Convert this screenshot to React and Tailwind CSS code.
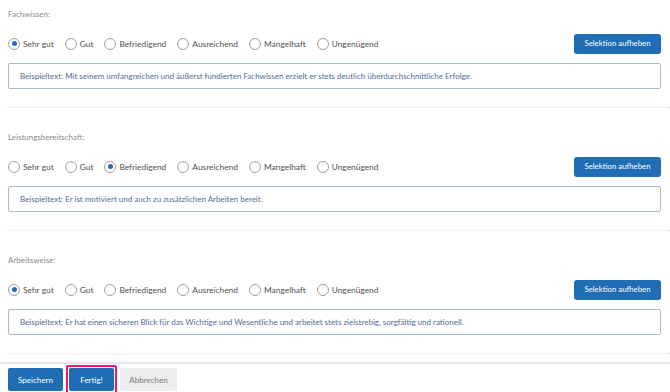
import { useState } from 'react';

const OPTIONS = ['Sehr gut', 'Gut', 'Befriedigend', 'Ausreichend', 'Mangelhaft', 'Ungenügend'];

const SECTIONS = [
  {
    label: 'Fachwissen:',
    selected: 'Sehr gut',
    text: 'Beispieltext: Mit seinem umfangreichen und äußerst fundierten Fachwissen erzielt er stets deutlich überdurchschnittliche Erfolge.',
  },
  {
    label: 'Leistungsbereitschaft:',
    selected: 'Befriedigend',
    text: 'Beispieltext: Er ist motiviert und auch zu zusätzlichen Arbeiten bereit.',
  },
  {
    label: 'Arbeitsweise:',
    selected: 'Sehr gut',
    text: 'Beispieltext: Er hat einen sicheren Blick für das Wichtige und Wesentliche und arbeitet stets zielstrebig, sorgfältig und rationell.',
  },
];

function Radio({ label, checked, onChange }) {
  return (
    <label className="flex items-center gap-[3px] cursor-pointer" onClick={onChange}>
      <span className="w-[12px] h-[12px] rounded-full border border-[#a0a0a0] bg-white flex items-center justify-center">
        {checked && <span className="w-[5px] h-[5px] rounded-full bg-[#1f6db5]" />}
      </span>
      <span className="text-[8.4px] text-[#505050]">{label}</span>
    </label>
  );
}

function Section({ section, first }) {
  const [value, setValue] = useState(section.selected);

  return (
    <div className={`${first ? 'pt-[8px]' : 'pt-[23px]'} pb-[18px] border-b border-dotted border-[#dcdcdc] ml-[7px]`}>
      <div className="h-[12px] leading-[12px] text-[8px] text-[#8a8a8a] pl-[1px]">{section.label}</div>
      <div className="mt-[14px] h-[20px] flex items-center justify-between pl-[1px] pr-[9px]">
        <div className="flex items-center gap-x-[11px]">
          {OPTIONS.map((o) => (
            <Radio key={o} label={o} checked={value === o} onChange={() => setValue(o)} />
          ))}
        </div>
        <button
          onClick={() => setValue(null)}
          className="h-[20px] w-[87px] rounded-[3px] bg-[#1f6db5] text-white text-[7.8px]"
        >
          Selektion aufheben
        </button>
      </div>
      <div className="mt-[9px] ml-[1px] mr-[9px] h-[26px] border border-[#a9bbd3] rounded-[2px] flex items-center px-[11px] text-[8px] text-[#4f6c98]">
        {section.text}
      </div>
    </div>
  );
}

export default function App() {
  return (
    <div className="w-[670px] h-[392px] bg-white overflow-hidden" style={{ fontFamily: 'Lato, "Open Sans", sans-serif' }}>
      {SECTIONS.map((s, i) => (
        <Section key={s.label} section={s} first={i === 0} />
      ))}

      <div className="mt-[8px] border-t-2 border-[#e6e6e6] pt-[1px] px-[8px] flex items-center gap-[3px]">
        <button className="h-[23px] w-[55px] rounded-[2px] bg-[#1f6db5] text-white text-[8px]">Speichern</button>
        <div className="p-[1px] border-2 border-[#e8177e] rounded-[2px]">
          <button className="h-[23px] w-[45px] rounded-[2px] bg-[#1f6db5] text-white text-[8px] block">Fertig!</button>
        </div>
        <button className="h-[23px] w-[57px] rounded-[2px] bg-[#ececec] text-[#7a7a7a] text-[8px]">Abbrechen</button>
      </div>
    </div>
  );
}
